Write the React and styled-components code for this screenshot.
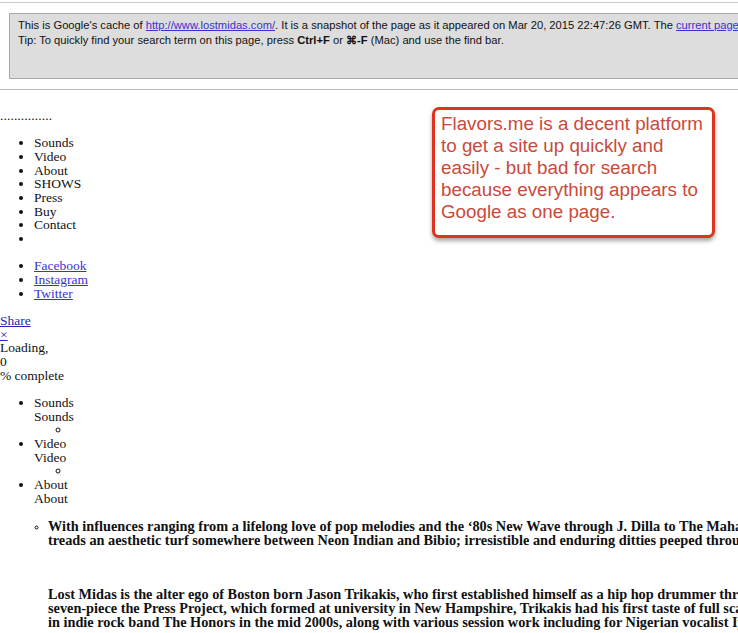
import React from 'react'
import styled, { createGlobalStyle } from 'styled-components'

const GlobalStyle = createGlobalStyle`
    html, body {
        margin: 0;
        padding: 0;
        background: #ffffff;
        overflow: hidden;
    }
    body {
        font-family: "Liberation Serif", "Times New Roman", serif;
        font-size: 13.5px;
        line-height: 13.7px;
        color: #111;
    }
`
const Page = styled.div`
    position: relative;
    width: 738px;
    height: 633px;
    overflow: hidden;
`
const CacheHeader = styled.div`
    margin-top: 2px;
    border-top: 1px solid #c8c8c8;
    padding: 10px 0 10px 9px;
    border-bottom: 1px solid #b8b8b8;
`
const CacheBox = styled.div`
    background: #dddddd;
    border: 1px solid #a9a9a9;
    border-right: none;
    height: 60px;
    padding: 4px 0 0 8px;
    font-family: "Liberation Sans", Arial, sans-serif;
    font-size: 11.2px;
    line-height: 15px;
    color: #111;
    white-space: nowrap;
`
const Link = styled.a`
    color: ${(p) => (p.$dark ? '#2a22b8' : '#3b2fd6')};
    text-decoration: underline;
`
const Body = styled.div`
    padding-top: 19px;
    white-space: nowrap;
`
const Dots = styled.div`
    letter-spacing: 0.1px;
`
const List = styled.ul`
    margin: 13.5px 0;
    padding-left: 34px;
    list-style: disc;
`
const SubList = styled.ul`
    margin: 0;
    padding-left: 37px;
    list-style: circle;
`
const Line = styled.div``
const BoldList = styled.ul`
    margin: 13.5px 0 0;
    padding-left: 48px;
    list-style: circle;
    font-weight: bold;
    font-size: 14.3px;
    line-height: 14px;
    li::marker {
        font-size: 10px;
    }
`
const Para = styled.p`
    margin: 40px 0 0 48px;
    font-weight: bold;
    font-size: 14.3px;
    line-height: 14px;
`
const Callout = styled.div`
    position: absolute;
    left: 432px;
    top: 107px;
    width: 271px;
    height: 122px;
    border: 3px solid #e0321f;
    border-radius: 7px;
    box-shadow: 0 3px 4px rgba(0, 0, 0, 0.35);
    background: #ffffff;
    padding: 3px 0 0 6px;
    font-family: "Liberation Sans", Arial, sans-serif;
    font-size: 18.8px;
    line-height: 22px;
    color: #c94a3c;
`

const nav = ['Sounds', 'Video', 'About', 'SHOWS', 'Press', 'Buy', 'Contact', '']
const social = ['Facebook', 'Instagram', 'Twitter']
const sections = ['Sounds', 'Video']

function App() {
  return (
    <Page>
        <GlobalStyle />
        <CacheHeader>
            <CacheBox>
                This is Google's cache of <Link href="#">http://www.lostmidas.com/</Link>. It is a snapshot of the page as it appeared on Mar 20, 2015 22:47:26 GMT. The <Link href="#">current page</Link> could have changed in the meantime.
                <br />
                Tip: To quickly find your search term on this page, press <b>Ctrl+F</b> or <b>⌘-F</b> (Mac) and use the find bar.
            </CacheBox>
        </CacheHeader>
        <Body>
            <Dots>...............</Dots>
            <List>
                {nav.map((item, i) => (
                    <li key={i}>{item}</li>
                ))}
            </List>
            <List>
                {social.map((item) => (
                    <li key={item}><Link href="#">{item}</Link></li>
                ))}
            </List>
            <Line><Link href="#" $dark>Share</Link></Line>
            <Line><Link href="#" $dark>×</Link></Line>
            <Line>Loading,</Line>
            <Line>0</Line>
            <Line>% complete</Line>
            <List>
                {sections.map((item) => (
                    <li key={item}>
                        {item}
                        <Line>{item}</Line>
                        <SubList><li></li></SubList>
                    </li>
                ))}
                <li>
                    About
                    <Line>About</Line>
                </li>
            </List>
            <BoldList>
                <li>
                    With influences ranging from a lifelong love of pop melodies and the ‘80s New Wave through J. Dilla to The Mahavishnu Orchestra, Lost Midas
                    <br />
                    treads an aesthetic turf somewhere between Neon Indian and Bibio; irresistible and enduring ditties peeped through a kaleidoscope.
                </li>
            </BoldList>
            <Para>
                Lost Midas is the alter ego of Boston born Jason Trikakis, who first established himself as a hip hop drummer through the
                <br />
                seven-piece the Press Project, which formed at university in New Hampshire, Trikakis had his first taste of full scale touring
                <br />
                in indie rock band The Honors in the mid 2000s, along with various session work including for Nigerian vocalist Iyadunni.
            </Para>
        </Body>
        <Callout>
            Flavors.me is a decent platform
            <br />
            to get a site up quickly and
            <br />
            easily - but bad for search
            <br />
            because everything appears to
            <br />
            Google as one page.
        </Callout>
    </Page>
  )
}

export default App
